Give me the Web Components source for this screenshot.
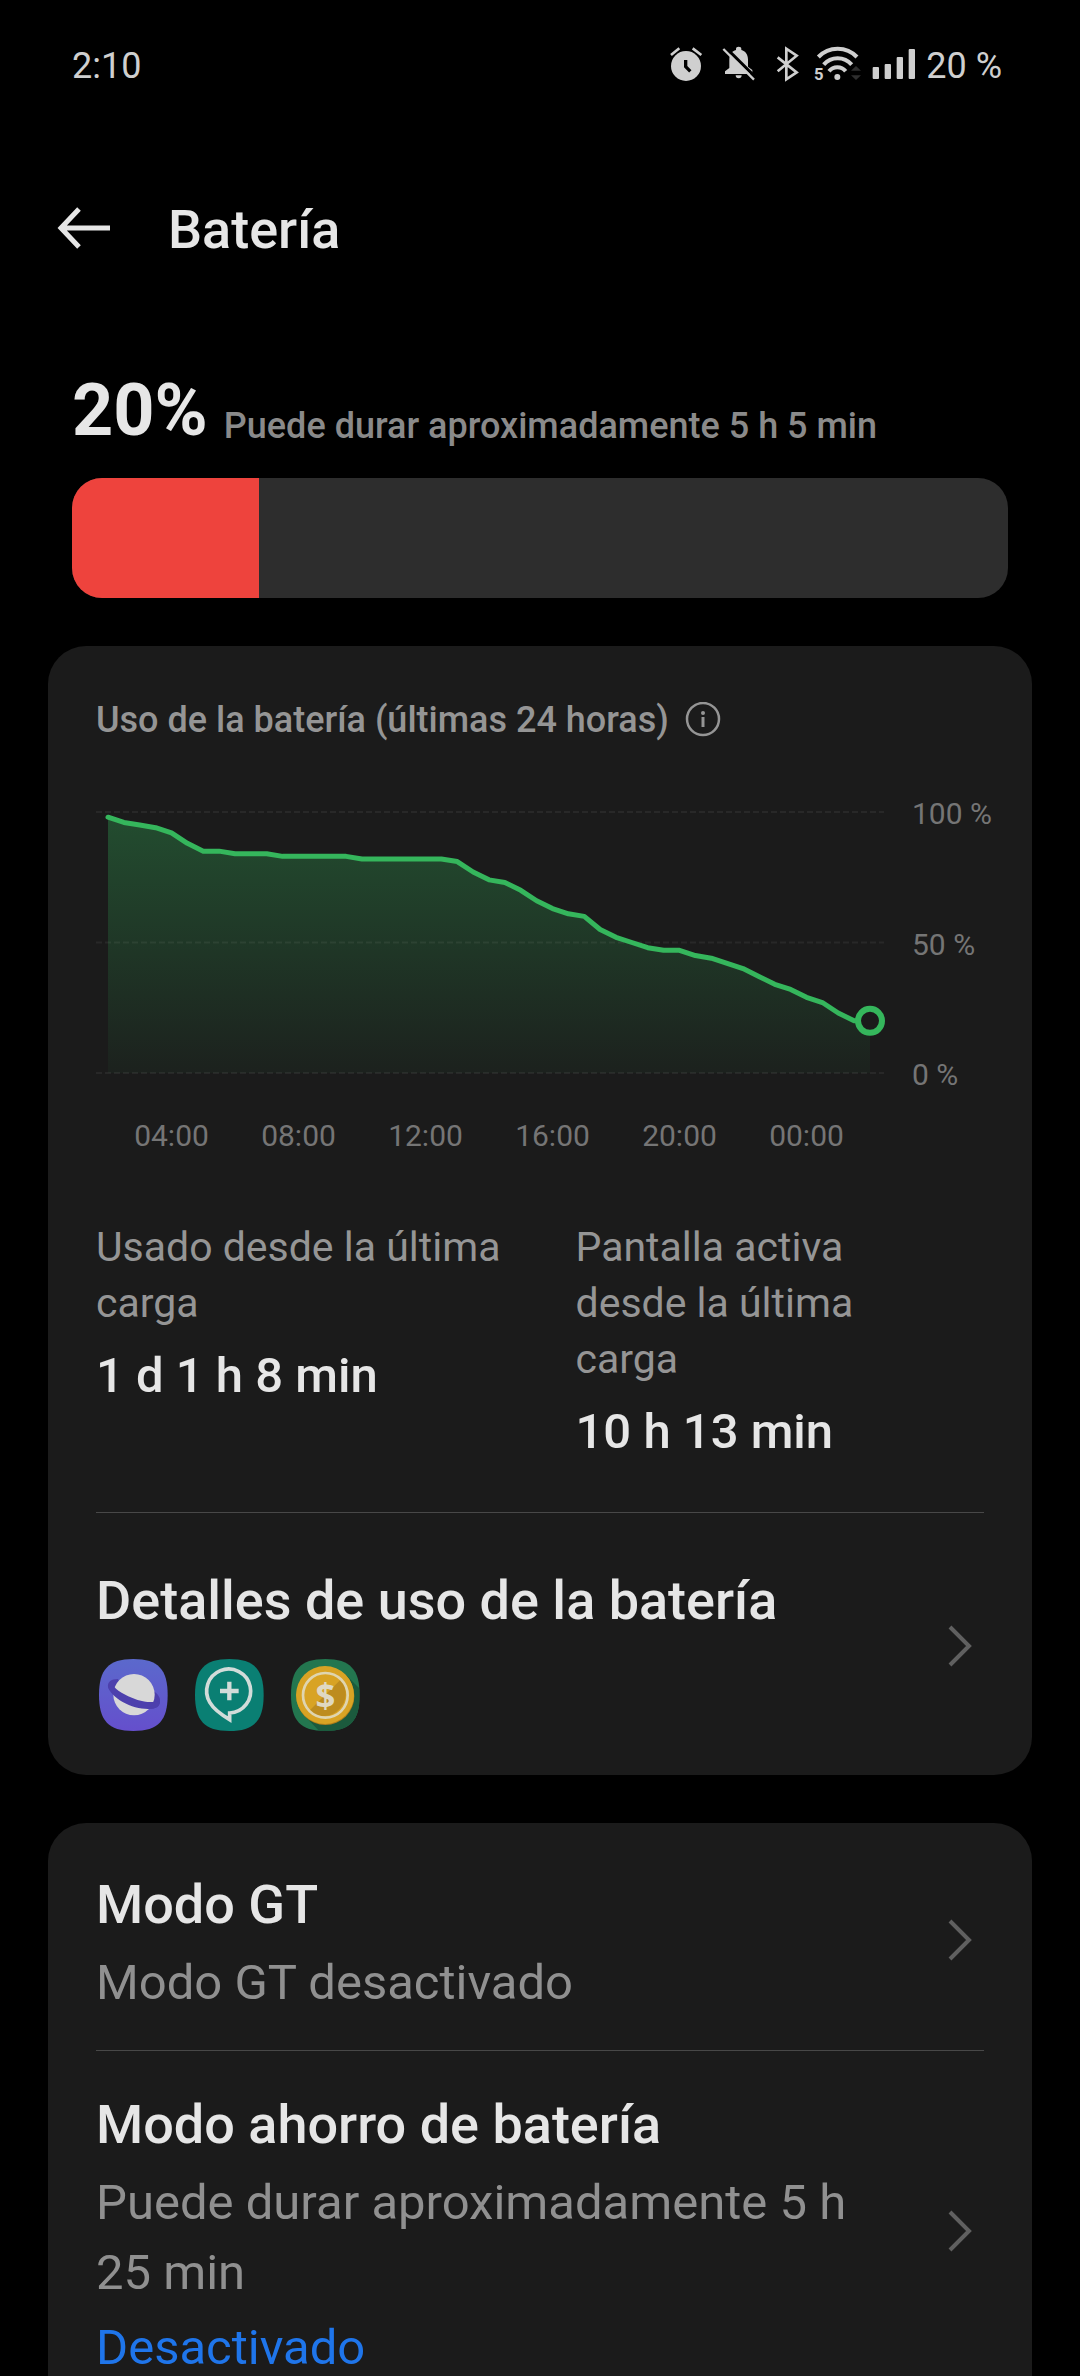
<!DOCTYPE html>
<html lang="es">
<head>
<meta charset="utf-8">
<meta name="viewport" content="width=device-width, initial-scale=1">
<title>Batería</title>
<style>
  html, body { margin: 0; height: 100%; background: #000; }
  body { font-family: Roboto, "Noto Sans", sans-serif; color: #e6e6e6; overflow: hidden; }
</style>
</head>
<body>
<battery-page>
  <status-bar slot="status" time="2:10" level="20 %"></status-bar>
  <app-bar slot="header">Batería</app-bar>
  <battery-level value="20">Puede durar aproximadamente 5 h 5 min</battery-level>
  <settings-card>
    <usage-heading>Uso de la batería (últimas 24 horas)</usage-heading>
    <usage-chart
      values="98,96,95,94,92,88,85,85,84,84,84,83,83,83,83,83,82,82,82,82,82,82,81,77,74,73,70,66,63,61,60,55,52,50,48,47,47,45,44,42,40,37,34,32,29,27,23,20,20"
      hours="04:00,08:00,12:00,16:00,20:00,00:00"></usage-chart>
    <stat-grid>
      <stat-item value="1 d 1 h 8 min">Usado desde la última carga</stat-item>
      <stat-item value="10 h 13 min">Pantalla activa desde la última carga</stat-item>
    </stat-grid>
    <card-divider class="spaced"></card-divider>
    <settings-row class="details" href="#detalles" label="Detalles de uso de la batería">
      <app-icons></app-icons>
    </settings-row>
  </settings-card>
  <settings-card class="inset">
    <settings-row href="#gt" label="Modo GT"><row-summary>Modo GT desactivado</row-summary></settings-row>
    <card-divider></card-divider>
    <settings-row href="#ahorro" label="Modo ahorro de batería">
      <row-summary>Puede durar aproximadamente 5 h 25 min</row-summary>
      <row-state>Desactivado</row-state>
    </settings-row>
  </settings-card>
</battery-page>

<script>
const define = (name, render) => customElements.define(name, class extends HTMLElement {
  connectedCallback() {
    if (this.shadowRoot) return;
    this.attachShadow({ mode: 'open' }).innerHTML = render(this);
  }
});

define('battery-page', () => `
  <style>
    :host { display: flex; flex-direction: column; height: 100vh; }
    main { flex: 1; min-height: 0; overflow-y: auto; scrollbar-width: none;
      display: flex; flex-direction: column; gap: 48px; padding: 41px 48px 0; }
    main ::slotted(*) { flex: none; }
  </style>
  <slot name="status"></slot>
  <slot name="header"></slot>
  <main><slot></slot></main>`);

define('status-bar', el => `
  <style>
    :host { display: flex; justify-content: space-between; align-items: center; box-sizing: border-box;
      height: 132px; padding: 0 78px 0 72px; font-size: 36px; line-height: 42px; color: #cfcfcf; }
    .icons { display: flex; align-items: center; gap: 10px; }
    svg { height: 36px; display: block; fill: #cfcfcf; }
    .line { fill: none; stroke: #cfcfcf; }
    text { font: 700 50px Roboto, sans-serif; }
  </style>
  <span>${el.getAttribute('time')}</span>
  <div class="icons">
    <svg width="42" viewBox="84 54 126 108" overflow="visible" aria-hidden="true">
      <circle cx="132" cy="108" r="45"/>
      <path d="M87 75 112 55M152 55l26 20" class="line" stroke-width="8"/>
      <path d="M131 90v20l14 14" fill="none" stroke="#000" stroke-width="10"/>
    </svg>
    <svg width="44" viewBox="240 54 132 108" overflow="visible" aria-hidden="true">
      <path d="M249 132v-8l13-10V88c0-15 8-25 20-28v-3a8 7 0 0 1 16 0v3c12 3 20 13 20 28v22l13 10v12z"/>
      <path d="M281 136h18a9 9 0 0 1-18 0z"/>
      <path d="M248 50 344 145" stroke="#000" stroke-width="9"/>
      <path d="M244 57 336 149" class="line" stroke-width="7"/>
    </svg>
    <svg width="28" viewBox="402 54 84 108" overflow="visible" aria-hidden="true">
      <path d="M407 82l57 45-31 21V56l31 21-57 47" class="line" stroke-width="8"/>
    </svg>
    <svg width="48" viewBox="516 54 144 108" overflow="visible" aria-hidden="true">
      <g class="line" stroke-width="12">
        <path d="M529 81a80 80 0 0 1 116 0"/>
        <path d="M545 104a56 56 0 0 1 84 0"/>
        <path d="M561 124a32 32 0 0 1 50 0"/>
      </g>
      <circle cx="586" cy="141" r="9"/>
      <path d="M627 122h30l-15-14zM627 136h30l-15 14z" fill="#2e2e2e"/>
      <text x="516" y="151">5</text>
    </svg>
    <svg width="44" viewBox="690 54 132 108" aria-hidden="true">
      <rect x="692" y="111" width="19" height="36" rx="3"/>
      <rect x="728" y="102" width="19" height="45" rx="3"/>
      <rect x="764" y="81" width="19" height="66" rx="3"/>
      <rect x="800" y="57" width="19" height="90" rx="3"/>
    </svg>
    <span>${el.getAttribute('level')}</span>
  </div>`);

define('app-bar', () => `
  <style>
    :host { display: flex; align-items: center; gap: 48px; height: 196px; padding: 0 48px; }
    button { all: unset; display: block; width: 72px; height: 72px; cursor: pointer; }
    svg { display: block; width: 72px; height: 72px; fill: none; stroke: #e6e6e6; stroke-width: 5; }
    h1 { margin: 0; font-size: 54px; line-height: 64px; font-weight: 500; }
  </style>
  <button aria-label="Atrás"><svg viewBox="0 0 72 72"><path d="M31 15 13 34 31 53M13 34H62"/></svg></button>
  <h1><slot></slot></h1>`);

define('battery-level', el => `
  <style>
    :host { display: flex; flex-direction: column; gap: 25px; padding: 0 24px; }
    .text { display: flex; align-items: flex-end; gap: 16px; }
    strong { font-size: 72px; line-height: 84px; font-weight: 700; }
    .time { font-size: 36px; line-height: 54px; font-weight: 500; color: #8a8a8a; }
    .track { height: 120px; border-radius: 30px; background: #2d2d2d; overflow: hidden; }
    .fill { height: 100%; width: ${el.getAttribute('value')}%; background: #ee433d; }
  </style>
  <div class="text"><strong>${el.getAttribute('value')}%</strong><span class="time"><slot></slot></span></div>
  <div class="track"><div class="fill"></div></div>`);

define('settings-card', () => `
  <style>
    :host { display: flex; flex-direction: column; background: #1b1b1b; border-radius: 38px; }
    :host(.inset) { padding: 8px 0; }
  </style>
  <slot></slot>`);

define('usage-heading', () => `
  <style>
    :host { display: flex; align-items: center; gap: 16px; padding: 52px 48px 0; }
    h2 { margin: 0; font-size: 36px; line-height: 44px; font-weight: 500; color: #959595; }
    button { all: unset; display: block; cursor: pointer; }
    svg { display: block; width: 36px; height: 36px; }
  </style>
  <h2><slot></slot></h2>
  <button aria-label="Información"><svg viewBox="0 0 36 36">
    <circle cx="18" cy="17" r="16" fill="none" stroke="#959595" stroke-width="2.5"/>
    <circle cx="18" cy="11" r="2" fill="#959595"/><path d="M18 15v10" stroke="#959595" stroke-width="3"/>
  </svg></button>`);

define('usage-chart', el => {
  const values = el.getAttribute('values').split(',').map(Number);
  const hours = el.getAttribute('hours').split(',');
  const x = i => 12 + i * 762 / (values.length - 1);
  const y = v => 277 - v * 2.61;
  const line = values.map((v, i) => `${x(i)},${y(v)}`).join(' ');
  const last = values.length - 1;
  return `
  <style>
    :host { display: grid; grid-template-columns: minmax(0, 1fr) 120px; column-gap: 28px; row-gap: 25px;
      padding: 54px 0 0 48px; font-size: 30px; line-height: 36px; color: #757575; }
    svg { display: block; width: 100%; height: auto; overflow: visible; }
    .levels { display: flex; flex-direction: column; justify-content: space-between; }
    .hours { display: flex; padding: 0 14px 0 12px; }
    .hours span { flex: 1; text-align: center; }
  </style>
  <svg viewBox="0 0 788 297" role="img" aria-label="Nivel de batería">
    <defs><linearGradient id="fade" gradientUnits="userSpaceOnUse" x1="0" y1="16" x2="0" y2="277">
      <stop offset="0" stop-color="#33b85c" stop-opacity=".32"/>
      <stop offset="1" stop-color="#33b85c" stop-opacity=".04"/>
    </linearGradient></defs>
    <polygon points="${x(0)},277 ${line} ${x(last)},277" fill="url(#fade)"/>
    <path d="M0 16H788M0 146.5H788M0 277H788" stroke="#fff" stroke-opacity=".06" stroke-width="2" stroke-dasharray="6 3"/>
    <polyline points="${line}" fill="none" stroke="#35b65c" stroke-width="5" stroke-linecap="round" stroke-linejoin="round"/>
    <circle cx="${x(last)}" cy="${y(values[last])}" r="12" fill="#1b1b1b" stroke="#35b65c" stroke-width="6"/>
  </svg>
  <div class="levels"><span>100 %</span><span>50 %</span><span>0 %</span></div>
  <div class="hours">${hours.map(h => `<span>${h}</span>`).join('')}</div>`;
});

define('stat-grid', () => `
  <style>
    :host { display: grid; grid-template-columns: 54% 46%; padding: 65px 48px 48px; }
  </style>
  <slot></slot>`);

define('stat-item', el => `
  <style>
    :host { display: flex; flex-direction: column; gap: 13px; padding-right: 48px; }
    .label { font-size: 41px; line-height: 56px; color: #959595; }
    .value { font-size: 49px; line-height: 64px; font-weight: 500; }
  </style>
  <span class="label"><slot></slot></span>
  <span class="value">${el.getAttribute('value')}</span>`);

define('card-divider', () => `
  <style>
    :host { display: block; height: 1px; margin: 0 48px; background: #484848; }
    :host(.spaced) { margin-bottom: 6px; }
  </style>`);

define('settings-row', el => `
  <style>
    :host { display: block; }
    a { display: flex; align-items: center; gap: 48px; padding: 0 60px 0 48px; color: inherit; text-decoration: none; }
    .text { flex: 1; min-width: 0; display: flex; flex-direction: column; padding: 42px 0 32px; }
    :host(.details) .text { padding: 50px 0 44px; }
    h2 { margin: 0; font-size: 54px; line-height: 64px; font-weight: 500; }
    svg { flex: none; width: 24px; height: 48px; fill: none; stroke: #606060; stroke-width: 4; }
  </style>
  <a href="${el.getAttribute('href')}">
    <div class="text"><h2>${el.getAttribute('label')}</h2><slot></slot></div>
    <svg viewBox="0 0 24 48" aria-hidden="true"><path d="M2 4 21 23 2 42"/></svg>
  </a>`);

define('row-summary', () => `
  <style>:host { display: block; margin-top: 11px; font-size: 49px; line-height: 70px; color: #909090; }</style>
  <slot></slot>`);

define('row-state', () => `
  <style>:host { display: block; margin-top: 8px; font-size: 49px; line-height: 64px; color: #1f75ea; }</style>
  <slot></slot>`);

define('app-icons', () => {
  const tile = 'M160 297C236 297 263 330 263 405S236 513 160 513 57 480 57 405 84 297 160 297z';
  return `
  <style>
    :host { display: flex; gap: 24px; margin-top: 26px; }
    svg { display: block; width: 72px; height: 72px; }
    text { font: 700 104px "Open Sans", sans-serif; text-anchor: middle; }
  </style>
  <svg viewBox="48 297 216 216" aria-hidden="true">
    <defs><linearGradient id="sky" x1="0" y1="0" x2="0" y2="1">
      <stop offset="0" stop-color="#5b69cc"/><stop offset="1" stop-color="#654fcc"/></linearGradient></defs>
    <path d="${tile}" fill="url(#sky)"/>
    <path d="M114 357C92 357 82 367 84 381 88 400 110 400 130 390zM222 394C234 403 242 414 240 425 238 440 228 446 214 446L200 420z" fill="#4d40ad"/>
    <circle cx="162" cy="404" r="62" fill="#d8d8d8"/>
    <path d="M84 376C86 396 104 412 128 426 156 442 190 449 216 446 232 444 240 436 240 424L224 425C196 429 162 418 136 404 120 396 108 388 103 381z" fill="#4d40ad"/>
  </svg>
  <svg viewBox="336 297 216 216" aria-hidden="true">
    <path d="${tile}" transform="translate(288)" fill="#0a7f73"/>
    <path d="M449 459A66 66 0 1 0 390 428C400 446 424 464 449 479z" fill="none" stroke="#d2dcd9" stroke-width="11"/>
    <path d="M420 393h56M448 365v56" stroke="#d2dcd9" stroke-width="13"/>
  </svg>
  <svg viewBox="624 297 216 216" aria-hidden="true">
    <defs><clipPath id="tile"><path d="${tile}" transform="translate(576)"/></clipPath></defs>
    <g clip-path="url(#tile)">
      <rect x="624" y="297" width="216" height="216" fill="#23764f"/>
      <path d="M796 343 850 397V520H724L674 467z" fill="#1b5a3d"/>
      <circle cx="736" cy="408" r="87" fill="#b07d1a"/>
      <circle cx="735" cy="405" r="87" fill="#d8a324"/>
      <path d="M783 358A68 68 0 0 1 687 453z" fill="#bd8c1f"/>
      <circle cx="736" cy="406" r="67" fill="none" stroke="#dfd5b0" stroke-width="8"/>
      <text x="736" y="443" fill="#dfd8c2">$</text>
    </g>
  </svg>`;
});
</script>
</body>
</html>
